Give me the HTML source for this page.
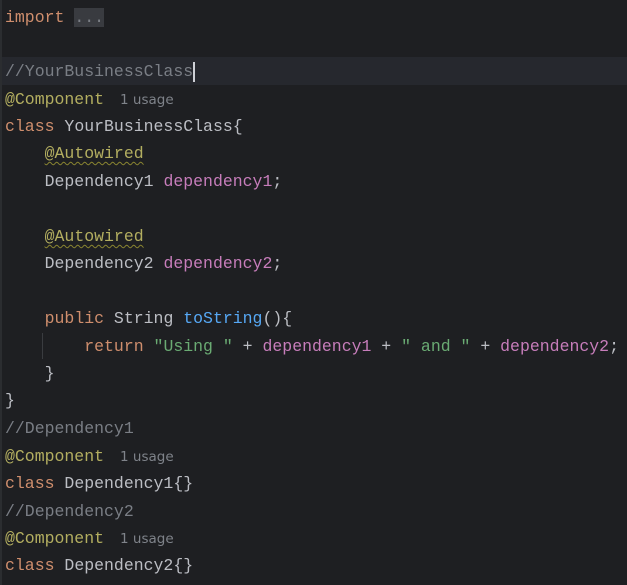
<!DOCTYPE html>
<html><head><style>
body{margin:0;width:627px;height:585px;background:#1e1f22;overflow:hidden;position:relative;font-family:"Liberation Mono",monospace;font-size:16.5px;color:#bcbec4}
.l{position:absolute;left:5px;height:26px;line-height:26px;white-space:pre}
.k{color:#cf8e6d}.a{color:#b3ae60}.c{color:#7a7e85}.f{color:#c77dbb}.m{color:#56a8f5}.s{color:#6aab73}
.h{font-family:"DejaVu Sans",sans-serif;font-size:13.5px;color:#7f838a;margin-left:16px}
.u{text-decoration:underline wavy #8a8530;text-decoration-thickness:1px;text-underline-offset:3px}
.cur{position:absolute;left:0;top:57px;width:627px;height:28px;background:#26282e}
.fold{position:absolute;left:0;top:0;width:2px;height:585px;background:#2b2d30}
</style></head><body>
<div class="cur"></div>
<div class="fold"></div>
<div style="position:absolute;left:42px;top:333px;width:1px;height:26px;background:#3a3c40"></div>
<div class="l" style="top:5px"><span class="k">import</span> <span class="c" style="background:#393b40">...</span></div>
<div class="l" style="top:59px"><span class="c">//YourBusinessClass</span><span style="display:inline-block;width:2px;height:20px;background:#ced0d6;vertical-align:middle"></span></div>
<div class="l" style="top:87px"><span class="a">@Component</span><span class="h">1 usage</span></div>
<div class="l" style="top:114px"><span class="k">class</span> YourBusinessClass{</div>
<div class="l" style="top:141px">    <span class="a u">@Autowired</span></div>
<div class="l" style="top:169px">    Dependency1 <span class="f">dependency1</span>;</div>
<div class="l" style="top:224px">    <span class="a u">@Autowired</span></div>
<div class="l" style="top:251px">    Dependency2 <span class="f">dependency2</span>;</div>
<div class="l" style="top:306px">    <span class="k">public</span> String <span class="m">toString</span>(){</div>
<div class="l" style="top:334px">        <span class="k">return</span> <span class="s">"Using "</span> + <span class="f">dependency1</span> + <span class="s">" and "</span> + <span class="f">dependency2</span>;</div>
<div class="l" style="top:361px">    }</div>
<div class="l" style="top:388px">}</div>
<div class="l" style="top:416px"><span class="c">//Dependency1</span></div>
<div class="l" style="top:444px"><span class="a">@Component</span><span class="h">1 usage</span></div>
<div class="l" style="top:471px"><span class="k">class</span> Dependency1{}</div>
<div class="l" style="top:499px"><span class="c">//Dependency2</span></div>
<div class="l" style="top:526px"><span class="a">@Component</span><span class="h">1 usage</span></div>
<div class="l" style="top:553px"><span class="k">class</span> Dependency2{}</div>
</body></html>
